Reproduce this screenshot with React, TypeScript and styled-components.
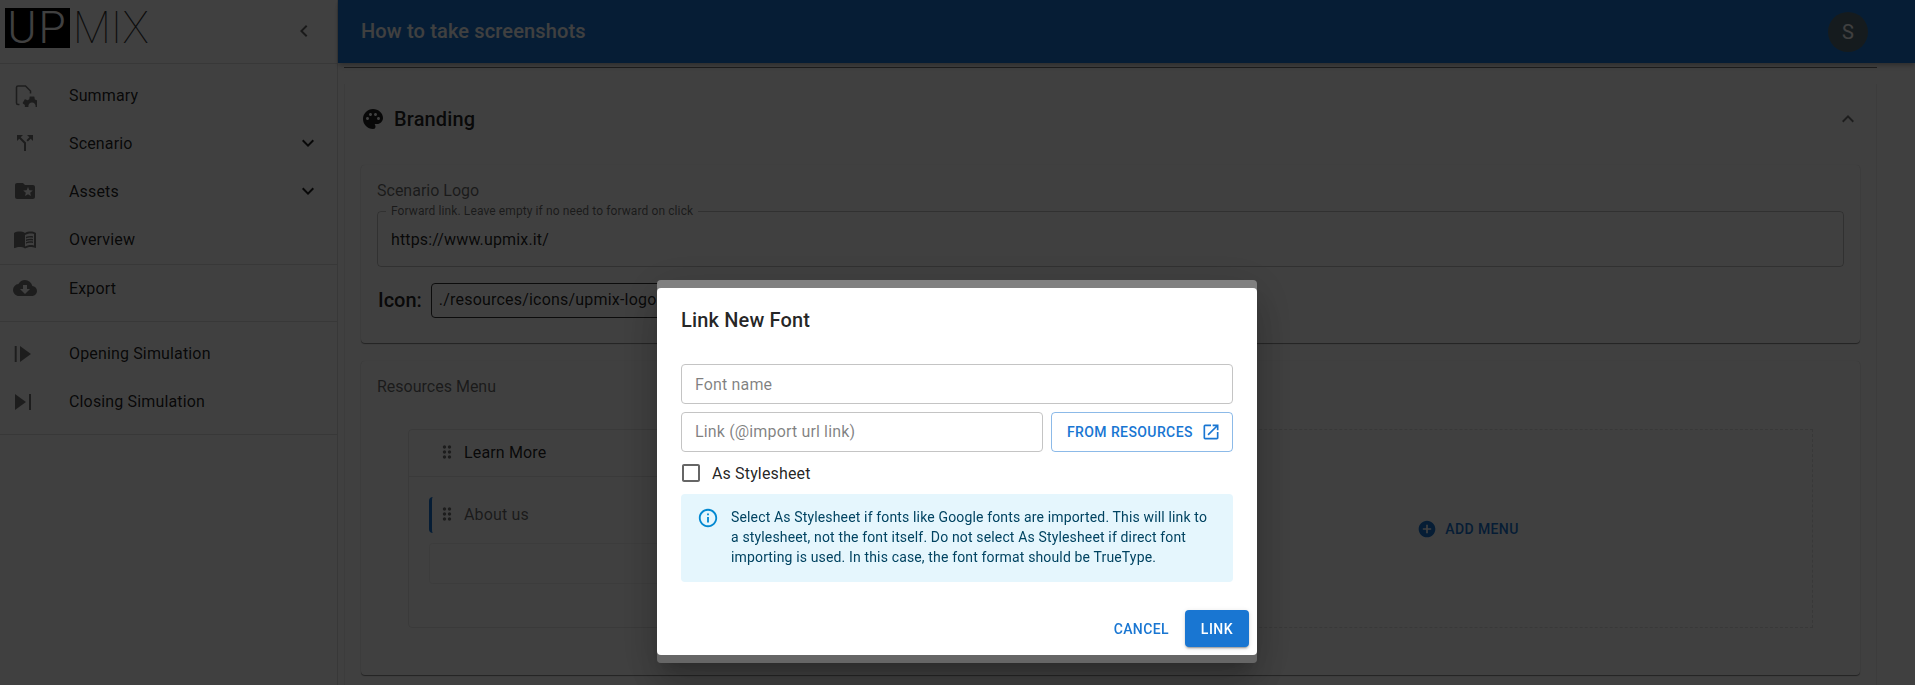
import styled, { createGlobalStyle } from "styled-components";
import {
  MdAddCircle,
  MdCallSplit,
  MdCheckBoxOutlineBlank,
  MdChevronLeft,
  MdCloudDownload,
  MdDragIndicator,
  MdExpandLess,
  MdExpandMore,
  MdFolderSpecial,
  MdInfoOutline,
  MdMenuBook,
  MdOpenInNew,
  MdPalette,
  MdSettings,
} from "react-icons/md";

const GlobalStyle = createGlobalStyle`
  html, body {
    margin: 0;
    padding: 0;
    background: #fff;
    overflow: hidden;
  }
  * { box-sizing: border-box; }
  body {
    font-family: Roboto, "Liberation Sans", sans-serif;
    color: rgba(0, 0, 0, 0.87);
  }
`;

const Page = styled.div`
  display: grid;
  grid-template-columns: 338px 1fr;
  width: 1915px;
  height: 685px;
  overflow: hidden;
`;

const Sidebar = styled.aside`
  border-right: 1px solid rgba(0, 0, 0, 0.12);
  display: flex;
  flex-direction: column;
`;

const SidebarHead = styled.div`
  height: 64px;
  border-bottom: 1px solid rgba(0, 0, 0, 0.12);
  padding: 8px 21px 0 5px;
  display: flex;
  justify-content: space-between;
  color: rgba(0, 0, 0, 0.6);
  svg { margin-top: 11px; }
`;

const Logo = styled.div`
  display: flex;
  height: 40px;
  font-weight: 100;
  font-size: 44px;
  line-height: 41px;
  color: #333;
`;

const LogoMark = styled.span`
  width: 65px;
  background: #000;
  color: #fff;
  font-weight: 300;
  text-align: center;
  letter-spacing: 2px;
`;

const LogoWord = styled.span`
  padding-left: 3px;
`;

const NavGroup = styled.nav<{ $pad: string }>`
  padding: ${(p) => p.$pad};
  border-bottom: 1px solid rgba(0, 0, 0, 0.12);
`;

const NavItem = styled.div<{ $lift?: boolean }>`
  height: 48px;
  padding: 0 17px ${(p) => (p.$lift ? 2 : 0)}px 13px;
  display: flex;
  align-items: center;
  font-size: 16px;
  letter-spacing: 0.15px;
`;

const NavIcon = styled.span`
  width: 56px;
  height: 24px;
  flex: none;
  color: rgba(0, 0, 0, 0.54);
  svg { display: block; width: 24px; height: 24px; }
`;

const NavLabel = styled.span`
  flex: 1;
`;

const Main = styled.main`
  display: flex;
  flex-direction: column;
  min-width: 0;
`;

const TopBar = styled.header`
  height: 63px;
  flex: none;
  background: #1976d2;
  color: #fff;
  padding: 0 47px 0 23px;
  display: flex;
  align-items: center;
  justify-content: space-between;
  position: relative;
  z-index: 1;
  box-shadow: 0 2px 4px -1px rgba(0, 0, 0, 0.2), 0 4px 5px 0 rgba(0, 0, 0, 0.14);
`;

const PageTitle = styled.h1`
  margin: 0 0 2px;
  font-size: 20px;
  font-weight: 500;
  letter-spacing: 0.15px;
`;

const Avatar = styled.div`
  width: 40px;
  height: 40px;
  border-radius: 50%;
  background: #546e7a;
  display: flex;
  align-items: center;
  justify-content: center;
  font-size: 20px;
`;

const Content = styled.div`
  flex: 1;
  padding: 4px 38px 0 6px;
  min-height: 0;
`;

const Accordion = styled.section`
  border-top: 1px solid rgba(0, 0, 0, 0.55);
  padding-top: 16px;
`;

const AccordionBody = styled.div`
  border-left: 1px solid rgba(0, 0, 0, 0.06);
  border-right: 1px solid rgba(0, 0, 0, 0.06);
  padding: 0 16px;
  height: 640px;
`;

const AccordionHead = styled.div`
  height: 70px;
  display: flex;
  align-items: center;
  font-size: 20px;
  font-weight: 500;
  letter-spacing: 0.15px;
`;

const HeadTitle = styled.span`
  flex: 1;
  margin-left: 9px;
`;

const Card = styled.div<{ $gap: number; $bottom: number }>`
  margin-top: ${(p) => p.$gap}px;
  padding: 13px 16px ${(p) => p.$bottom}px;
  border-radius: 4px;
  box-shadow: 0 1px 1px rgba(0, 0, 0, 0.45), 0 0 1px rgba(0, 0, 0, 0.2);
`;

const CardLabel = styled.div`
  font-size: 16px;
  line-height: 24px;
  padding-top: 1px;
  margin-bottom: -1px;
  color: rgba(0, 0, 0, 0.6);
`;

const OutlinedField = styled.div`
  position: relative;
  margin-top: 9px;
  height: 56px;
  border: 1px solid rgba(0, 0, 0, 0.23);
  border-radius: 4px;
  padding: 0 13px;
  display: flex;
  align-items: center;
  font-size: 16px;
  letter-spacing: 0.15px;
`;

const FieldLegend = styled.span`
  position: absolute;
  left: 8px;
  top: -9px;
  padding: 0 5px;
  background: #fff;
  font-size: 12px;
  line-height: 16px;
  letter-spacing: 0.1px;
  color: rgba(0, 0, 0, 0.6);
`;

const IconRow = styled.div`
  margin-top: 16px;
  padding-bottom: 25px;
  display: flex;
  align-items: center;
  gap: 9px;
`;

const IconLabel = styled.span`
  font-size: 20px;
  font-weight: 500;
  padding: 0 0 2px 1px;
`;

const IconPath = styled.div`
  width: 400px;
  height: 35px;
  padding: 0 7px 2px;
  border: 1px solid #333;
  border-radius: 4px;
  display: flex;
  align-items: center;
  font-size: 16px;
  letter-spacing: 0.2px;
`;

const MenuArea = styled.div`
  margin: 31px 31px 0;
  height: 199px;
  display: grid;
  grid-template-columns: 716px 1fr;
`;

const MenuList = styled.div`
  border: 1px solid rgba(0, 0, 0, 0.1);
  border-radius: 4px;
`;

const MenuRow = styled.div`
  height: 47px;
  padding: 0 0 2px 28px;
  border-bottom: 1px solid rgba(0, 0, 0, 0.1);
  display: flex;
  align-items: center;
  gap: 7px;
  font-size: 16px;
  letter-spacing: 0.15px;
  color: rgba(0, 0, 0, 0.87);
  svg { color: rgba(0, 0, 0, 0.54); }
`;

const SubMenu = styled.div`
  margin: 20px 0 0 20px;
`;

const SubRow = styled.div`
  height: 36px;
  padding: 0 0 2px 5px;
  border-left: 3px solid #1976d2;
  border-radius: 4px 0 0 4px;
  display: flex;
  align-items: center;
  gap: 7px;
  font-size: 16px;
  letter-spacing: 0.15px;
  color: rgba(0, 0, 0, 0.6);
  svg { color: rgba(0, 0, 0, 0.54); }
`;

const EmptySlot = styled.div`
  margin-top: 10px;
  height: 41px;
  border: 1px solid rgba(0, 0, 0, 0.06);
  border-right: 0;
  border-radius: 4px 0 0 4px;
`;

const AddZone = styled.div`
  border: 1px dashed rgba(0, 0, 0, 0.12);
  border-left: 0;
  display: flex;
  align-items: center;
  justify-content: center;
  gap: 8px;
  color: #1976d2;
  font-size: 14px;
  font-weight: 500;
  letter-spacing: 0.4px;
`;

const Overlay = styled.div`
  position: fixed;
  inset: 0;
  z-index: 10;
  background: rgba(0, 0, 0, 0.75);
  display: flex;
  justify-content: center;
  padding: 280px 1px 0 0;
`;

const Dialog = styled.div`
  width: 600px;
  height: 383px;
  padding: 8px 0;
  border-radius: 4px;
  background: linear-gradient(#808080 0 50%, #666 50%);
  box-shadow: 0 11px 15px -7px rgba(0, 0, 0, 0.2), 0 24px 38px 3px rgba(0, 0, 0, 0.14),
    0 9px 46px 8px rgba(0, 0, 0, 0.12);
`;

const DialogBody = styled.div`
  height: 100%;
  background: #fff;
  border-radius: 4px;
  display: flex;
  flex-direction: column;
  padding: 0 24px;
`;

const DialogTitle = styled.h2`
  margin: 20px 0 0;
  font-size: 20px;
  line-height: 24px;
  font-weight: 500;
  letter-spacing: 0.15px;
`;

const FormField = styled.div<{ $grow?: boolean }>`
  height: 40px;
  padding: 0 13px 1px;
  border: 1px solid #c4c4c4;
  border-radius: 4px;
  display: flex;
  align-items: center;
  flex: ${(p) => (p.$grow ? 1 : "none")};
  font-size: 16px;
  letter-spacing: 0.15px;
  color: rgba(0, 0, 0, 0.5);
`;

const NameField = styled(FormField)`
  margin-top: 32px;
  padding: 1px 13px 0;
`;

const LinkRow = styled.div`
  margin-top: 8px;
  display: flex;
  gap: 8px;
`;

const ResourcesButton = styled.div`
  width: 182px;
  height: 40px;
  padding: 0 11px 0 15px;
  border: 1px solid rgba(25, 118, 210, 0.5);
  border-radius: 4px;
  color: #1976d2;
  display: flex;
  align-items: center;
  justify-content: space-between;
  font-size: 14px;
  font-weight: 500;
  letter-spacing: 0.4px;
`;

const CheckRow = styled.label`
  margin: 9px 0 0 -2px;
  height: 24px;
  display: flex;
  align-items: center;
  gap: 9px;
  font-size: 16px;
  letter-spacing: 0.15px;
  svg { color: rgba(0, 0, 0, 0.6); }
`;

const InfoAlert = styled.div`
  margin-top: 9px;
  height: 88px;
  padding: 13px 16px;
  background: #e5f6fd;
  border-radius: 4px;
  display: flex;
  gap: 12px;
  color: #014361;
  font-size: 14px;
  line-height: 20px;
  letter-spacing: 0.15px;
  svg { color: #0288d1; flex: none; }
`;

const DialogActions = styled.div`
  margin: 28px -16px 0 0;
  display: flex;
  align-items: center;
  justify-content: flex-end;
  gap: 16px;
`;

const TextButton = styled.span`
  color: #1976d2;
  font-size: 14px;
  font-weight: 500;
  letter-spacing: 0.4px;
`;

const PrimaryButton = styled.span`
  width: 64px;
  height: 37px;
  background: #1976d2;
  color: #fff;
  border-radius: 4px;
  display: flex;
  align-items: center;
  justify-content: center;
  font-size: 14px;
  font-weight: 500;
  letter-spacing: 0.5px;
  box-shadow: 0 3px 1px -2px rgba(0, 0, 0, 0.2), 0 2px 2px 0 rgba(0, 0, 0, 0.14),
    0 1px 5px 0 rgba(0, 0, 0, 0.12);
`;

const SummaryIcon = () => (
  <svg viewBox="0 0 24 24" fill="none" stroke="currentColor" strokeWidth="1.6">
    <path d="M6.5 21.5H5A1.5 1.5 0 0 1 3.5 20V4.5A1.5 1.5 0 0 1 5 3h7.5l5 5v2.5" />
    <MdSettings x="7" y="11" width="12" height="12" stroke="none" fill="currentColor" />
  </svg>
);

const OpeningIcon = () => (
  <svg viewBox="0 0 24 24" fill="currentColor">
    <path d="M1.7 5h2v16h-2zM7 5l11 8-11 8z" />
  </svg>
);

const ClosingIcon = () => (
  <svg viewBox="0 0 24 24" fill="currentColor">
    <path d="M2 5l11 8-11 8zM16 5h2v16h-2z" />
  </svg>
);

const navTop = [
  { label: "Summary", icon: <SummaryIcon /> },
  { label: "Scenario", icon: <MdCallSplit />, more: true },
  { label: "Assets", icon: <MdFolderSpecial />, more: true },
  { label: "Overview", icon: <MdMenuBook /> },
];

const navSim = [
  { label: "Opening Simulation", icon: <OpeningIcon /> },
  { label: "Closing Simulation", icon: <ClosingIcon /> },
];

export default function App() {
  return (
    <>
      <GlobalStyle />
      <Page>
        <Sidebar>
          <SidebarHead>
            <Logo>
              <LogoMark>UP</LogoMark>
              <LogoWord>MIX</LogoWord>
            </Logo>
            <MdChevronLeft size={24} />
          </SidebarHead>
          <NavGroup $pad="7px 0 1px">
            {navTop.map((item) => (
              <NavItem key={item.label}>
                <NavIcon>{item.icon}</NavIcon>
                <NavLabel>{item.label}</NavLabel>
                {item.more && <MdExpandMore size={24} />}
              </NavItem>
            ))}
          </NavGroup>
          <NavGroup $pad="0 0 8px">
            <NavItem $lift>
              <NavIcon>
                <MdCloudDownload />
              </NavIcon>
              <NavLabel>Export</NavLabel>
            </NavItem>
          </NavGroup>
          <NavGroup $pad="7px 0 9px">
            {navSim.map((item) => (
              <NavItem key={item.label}>
                <NavIcon>{item.icon}</NavIcon>
                <NavLabel>{item.label}</NavLabel>
              </NavItem>
            ))}
          </NavGroup>
        </Sidebar>

        <Main>
          <TopBar>
            <PageTitle>How to take screenshots</PageTitle>
            <Avatar>S</Avatar>
          </TopBar>
          <Content>
            <Accordion>
              <AccordionBody>
                <AccordionHead>
                  <MdPalette size={24} />
                  <HeadTitle>Branding</HeadTitle>
                  <MdExpandLess size={24} color="rgba(0,0,0,0.54)" />
                </AccordionHead>

                <Card $gap={11} $bottom={0}>
                  <CardLabel>Scenario Logo</CardLabel>
                  <OutlinedField>
                    <FieldLegend>Forward link. Leave empty if no need to forward on click</FieldLegend>
                    https://www.upmix.it/
                  </OutlinedField>
                  <IconRow>
                    <IconLabel>Icon:</IconLabel>
                    <IconPath>./resources/icons/upmix-logo.svg</IconPath>
                  </IconRow>
                </Card>

                <Card $gap={18} $bottom={47}>
                  <CardLabel>Resources Menu</CardLabel>
                  <MenuArea>
                    <MenuList>
                      <MenuRow>
                        <MdDragIndicator size={20} />
                        Learn More
                      </MenuRow>
                      <SubMenu>
                        <SubRow>
                          <MdDragIndicator size={20} />
                          About us
                        </SubRow>
                        <EmptySlot />
                      </SubMenu>
                    </MenuList>
                    <AddZone>
                      <MdAddCircle size={20} />
                      ADD MENU
                    </AddZone>
                  </MenuArea>
                </Card>
              </AccordionBody>
            </Accordion>
          </Content>
        </Main>
      </Page>

      <Overlay>
        <Dialog>
          <DialogBody>
            <DialogTitle>Link New Font</DialogTitle>
            <NameField>Font name</NameField>
            <LinkRow>
              <FormField $grow>Link (@import url link)</FormField>
              <ResourcesButton>
                FROM RESOURCES
                <MdOpenInNew size={20} />
              </ResourcesButton>
            </LinkRow>
            <CheckRow>
              <MdCheckBoxOutlineBlank size={24} />
              As Stylesheet
            </CheckRow>
            <InfoAlert>
              <MdInfoOutline size={22} />
              <span>
                Select As Stylesheet if fonts like Google fonts are imported. This will link to a
                stylesheet, not the font itself. Do not select As Stylesheet if direct font importing
                is used. In this case, the font format should be TrueType.
              </span>
            </InfoAlert>
            <DialogActions>
              <TextButton>CANCEL</TextButton>
              <PrimaryButton>LINK</PrimaryButton>
            </DialogActions>
          </DialogBody>
        </Dialog>
      </Overlay>
    </>
  );
}
